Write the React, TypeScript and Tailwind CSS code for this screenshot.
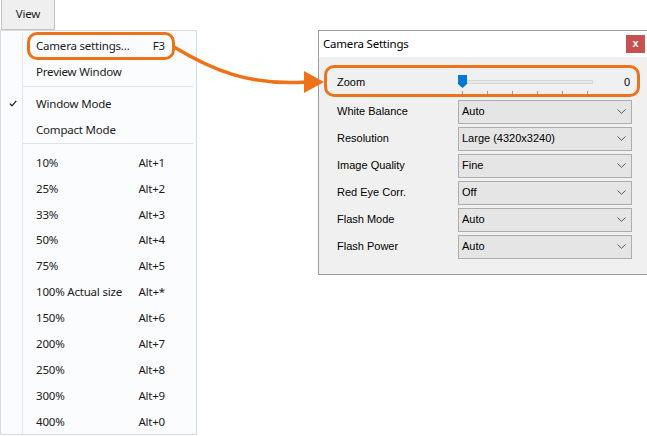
const zoomItems = [
  ["10%", "Alt+1"],
  ["25%", "Alt+2"],
  ["33%", "Alt+3"],
  ["50%", "Alt+4"],
  ["75%", "Alt+5"],
  ["100% Actual size", "Alt+*"],
  ["150%", "Alt+6"],
  ["200%", "Alt+7"],
  ["250%", "Alt+8"],
  ["300%", "Alt+9"],
  ["400%", "Alt+0"],
];

const combos = [
  ["White Balance", "Auto"],
  ["Resolution", "Large (4320x3240)"],
  ["Image Quality", "Fine"],
  ["Red Eye Corr.", "Off"],
  ["Flash Mode", "Auto"],
  ["Flash Power", "Auto"],
];

function MenuItem({ label, shortcut, checked }: { label: string; shortcut?: string; checked?: boolean }) {
  return (
    <div className="flex h-[26px] items-center">
      <div className="flex w-[22px] shrink-0 items-center justify-center self-stretch border-r border-[#e3e7ec]">
        {checked && (
          <svg width="8" height="7" viewBox="0 0 8 7" className="ml-[3px]">
            <path d="M0.8 3.6 L3 5.8 L7.3 0.8" fill="none" stroke="#222" strokeWidth="1.3" />
          </svg>
        )}
      </div>
      <span className="pl-[13px]">{label}</span>
      {shortcut && <span className="ml-auto mr-[31px]">{shortcut}</span>}
    </div>
  );
}

function Separator({ h }: { h: string }) {
  return (
    <div className={`flex ${h}`}>
      <div className="w-[22px] shrink-0 border-r border-[#e3e7ec]" />
      <div className="mr-[3px] mt-[1px] h-px flex-1 bg-[#dfe4ea]" />
    </div>
  );
}

function Chevron() {
  return (
    <svg width="9" height="5" viewBox="0 0 9 5">
      <path d="M0.5 0.5 L4.5 4.3 L8.5 0.5" fill="none" stroke="#5a5a5a" strokeWidth="1" />
    </svg>
  );
}

export default function App() {
  return (
    <div className="relative flex h-[436px] w-[647px] overflow-hidden bg-white">
      {/* left side: View button + dropdown */}
      <div className="flex w-[197px] shrink-0 flex-col font-['Noto_Sans',sans-serif] text-[11.5px] tracking-[-0.2px] text-[#1b1b1b]">
        <div className="ml-px flex h-[30px] w-[54px] items-center justify-center border-x border-b border-[#c6c6c6] bg-[#efefef] pb-[2px]">
          View
        </div>
        <div className="flex h-[405px] flex-col border border-[#d3dbe3] bg-[#fafcfe] pt-[2px]">
          <MenuItem label="Camera settings..." shortcut="F3" />
          <MenuItem label="Preview Window" />
          <Separator h="h-[6px]" />
          <MenuItem label="Window Mode" checked />
          <MenuItem label="Compact Mode" />
          <Separator h="h-[7px]" />
          {zoomItems.map(([l, s]) => (
            <MenuItem key={l} label={l} shortcut={s} />
          ))}
          <div className="flex flex-1">
            <div className="w-[22px] border-r border-[#e3e7ec]" />
          </div>
        </div>
      </div>

      {/* Camera Settings dialog */}
      <div className="ml-[121px] mt-[30px] flex h-[245px] w-[340px] shrink-0 flex-col border border-[#9c9c9c] bg-[#f0f0f0]">
        <div className="flex h-[26px] items-center justify-between bg-white pl-[4px] pr-[12px] font-['Noto_Sans',sans-serif] text-[11.5px] tracking-[-0.2px] text-black">
          <span>Camera Settings</span>
          <div className="flex h-[18px] w-[19px] items-center justify-center bg-[#c75050] pb-[2px] font-['Liberation_Sans',sans-serif] text-[11px] font-bold text-white">
            x
          </div>
        </div>
        <div className="flex flex-col pl-[18px] pt-[10px] font-['Liberation_Sans',sans-serif] text-[11px] text-black">
          {/* Zoom slider row */}
          <div className="flex h-[31px] items-center">
            <span className="w-[121px]">Zoom</span>
            <div className="relative h-[24px] w-[140px]">
              <div className="absolute left-[2px] top-[9px] h-[4px] w-[133px] border border-[#d6d6d6] bg-[#e7e7e7]" />
              <svg className="absolute left-0 top-[4px]" width="9" height="13" viewBox="0 0 9 13">
                <path d="M0 0 H9 V9 L4.5 13 L0 9 Z" fill="#0078d7" />
              </svg>
              <div className="absolute left-[4px] top-[20px] flex w-[126px] justify-between">
                {[0, 1, 2, 3, 4, 5].map((i) => (
                  <div key={i} className="h-[3px] w-px bg-[#9a9a9a]" />
                ))}
              </div>
            </div>
            <span className="ml-[26px]">0</span>
          </div>
          {combos.map(([l, v]) => (
            <div key={l} className="flex h-[27px] items-center">
              <span className="w-[121px]">{l}</span>
              <div className="flex h-[24px] w-[174px] items-center justify-between border border-[#adadad] bg-[#e5e5e5] pl-[3px] pr-[5px]">
                <span>{v}</span>
                <Chevron />
              </div>
            </div>
          ))}
        </div>
      </div>

      {/* callout highlights + arrow */}
      <div className="pointer-events-none absolute left-[27px] top-[32px] h-[28px] w-[148px] rounded-[10px] border-[3px] border-[#ee7219]" />
      <div className="pointer-events-none absolute left-[324px] top-[65px] h-[32px] w-[316px] rounded-[10px] border-[3px] border-[#ee7219]" />
      <svg className="pointer-events-none absolute left-0 top-0" width="647" height="436">
        <path d="M174 47 C 212 70, 250 86, 306 82" fill="none" stroke="#ee7219" strokeWidth="3.5" />
        <polygon points="304,71 324,82 304,93" fill="#ee7219" />
      </svg>
    </div>
  );
}
